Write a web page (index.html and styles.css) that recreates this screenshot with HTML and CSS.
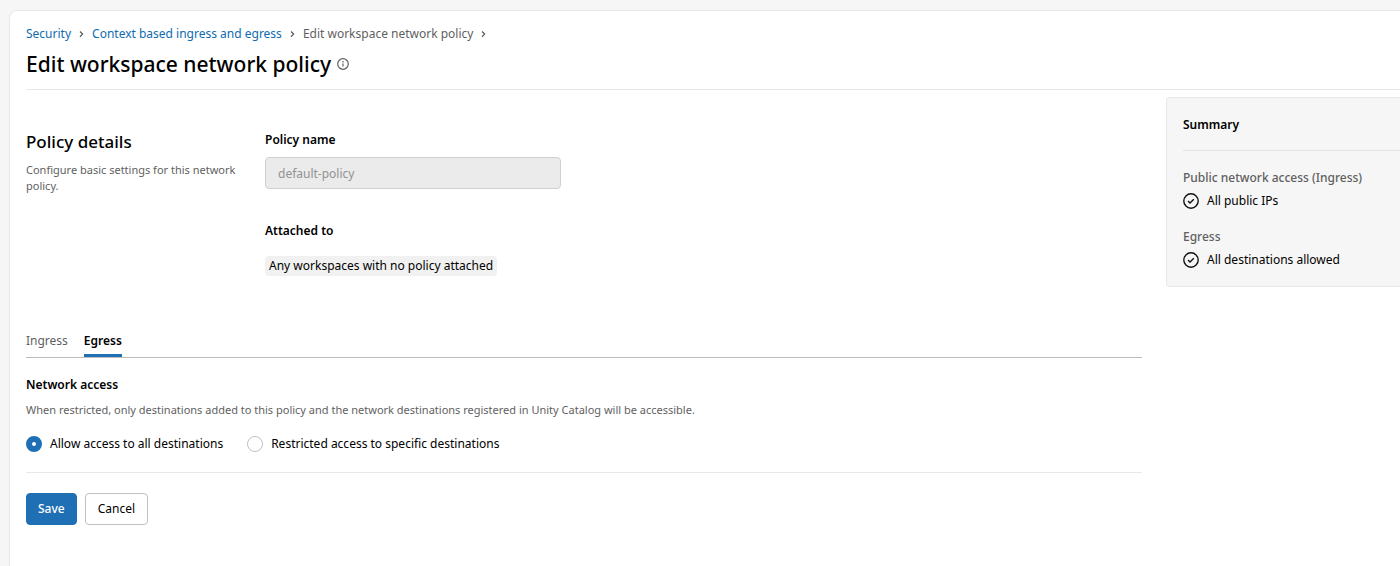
FILE: index.html
```html
<!DOCTYPE html>
<html lang="en">
<head>
<meta charset="utf-8">
<meta name="viewport" content="width=device-width, initial-scale=1">
<title>Edit workspace network policy</title>
<link rel="stylesheet" href="styles.css">
</head>
<body>
<div class="panel">
  <header class="page-header">
    <nav class="breadcrumb" aria-label="Breadcrumb">
      <a href="#">Security</a>
      <svg class="chevron" viewBox="0 0 5 8" aria-hidden="true"><path d="M1 1.5l2.6 2.6L1 6.7"/></svg>
      <a href="#">Context based ingress and egress</a>
      <svg class="chevron" viewBox="0 0 5 8" aria-hidden="true"><path d="M1 1.5l2.6 2.6L1 6.7"/></svg>
      <span>Edit workspace network policy</span>
      <svg class="chevron" viewBox="0 0 5 8" aria-hidden="true"><path d="M1 1.5l2.6 2.6L1 6.7"/></svg>
    </nav>
    <div class="title-row">
      <h1>Edit workspace network policy</h1>
      <svg class="info-icon" viewBox="0 0 12 12" aria-hidden="true"><circle cx="6" cy="6" r="5.3"/><path d="M6 5.4v3.2"/><path d="M6 3.1v1.3"/></svg>
    </div>
  </header>
  <div class="content">
    <main class="main">
      <section class="details">
        <div class="details-intro">
          <h2>Policy details</h2>
          <p class="hint">Configure basic settings for this network policy.</p>
        </div>
        <div class="details-fields">
          <label class="label" for="policy-name">Policy name</label>
          <input class="text-input" id="policy-name" type="text" value="default-policy" disabled>
          <h3 class="label attached-label">Attached to</h3>
          <span class="tag">Any workspaces with no policy attached</span>
        </div>
      </section>
      <div class="tabs" role="tablist">
        <button class="tab" type="button" role="tab" aria-selected="false">Ingress</button>
        <button class="tab tab-active" type="button" role="tab" aria-selected="true">Egress</button>
      </div>
      <section class="access">
        <h3 class="label">Network access</h3>
        <p class="hint">When restricted, only destinations added to this policy and the network destinations registered in Unity Catalog will be accessible.</p>
        <div class="radios">
          <label class="radio"><input type="radio" name="access" checked>Allow access to all destinations</label>
          <label class="radio"><input type="radio" name="access">Restricted access to specific destinations</label>
        </div>
      </section>
      <div class="actions">
        <button class="button primary" type="button">Save</button>
        <button class="button" type="button">Cancel</button>
      </div>
    </main>
    <aside class="summary">
      <h2 class="summary-title">Summary</h2>
      <h3 class="summary-label">Public network access (Ingress)</h3>
      <p class="summary-item"><svg class="check-icon" viewBox="0 0 16 16" aria-hidden="true"><circle cx="8" cy="8" r="7.2"/><path d="M5 8l2 2 3.8-3.8"/></svg>All public IPs</p>
      <h3 class="summary-label">Egress</h3>
      <p class="summary-item"><svg class="check-icon" viewBox="0 0 16 16" aria-hidden="true"><circle cx="8" cy="8" r="7.2"/><path d="M5 8l2 2 3.8-3.8"/></svg>All destinations allowed</p>
    </aside>
  </div>
</div>
</body>
</html>
```

FILE: styles.css
```css
* { box-sizing: border-box; }
body {
  margin: 0;
  min-height: 100vh;
  display: flex;
  padding: 10px 0 0 9px;
  background: #f6f6f6;
  color: #000;
  font: 12px/20px "Noto Sans", "Open Sans", sans-serif;
}
h1, h2, h3, p { margin: 0; }
button, input { font: inherit; color: inherit; }
.panel {
  flex: 1;
  min-width: 0;
  padding: 13px 0 16px 16px;
  background: #fff;
  border: 1px solid #e8e8e8;
  border-width: 1px 0 0 1px;
  border-radius: 8px 0 0 0;
}
.page-header { border-bottom: 1px solid #e8e8e8; padding-bottom: 11px; }
.breadcrumb { display: flex; align-items: center; gap: 8px; color: #5f5f5f; }
.breadcrumb a { color: #0e6bb0; text-decoration: none; }
.chevron { width: 5px; height: 8px; fill: none; stroke: #5f5f5f; stroke-width: 1.3; }
.title-row { display: flex; align-items: center; gap: 6px; margin-top: 6px; }
h1 { font-size: 21px; line-height: 28px; font-weight: 500; }
.info-icon { width: 12px; height: 12px; fill: none; stroke: #5f5f5f; stroke-width: 1.2; }
.content { display: grid; grid-template-columns: minmax(0, 1fr) 234px; gap: 24px; padding-top: 7px; }
.details { display: grid; grid-template-columns: 215px minmax(0, 1fr); gap: 24px; padding-top: 33px; }
.details h2 { font-size: 17px; line-height: 24px; font-weight: 500; margin-bottom: 8px; }
.hint { font-size: 11px; line-height: 16px; color: #5f5f5f; }
.label { display: block; font-size: 12px; line-height: 20px; font-weight: 600; }
.text-input {
  display: block;
  width: 296px;
  height: 32px;
  margin-top: 7px;
  padding: 0 12px;
  background: #ebebeb;
  border: 1px solid #d0d0d0;
  border-radius: 4px;
  color: #929292;
}
.attached-label { margin: 32px 0 15px; }
.tag { display: inline-block; padding: 0 4px; background: #f1f1f1; border-radius: 4px; }
.tabs { display: flex; gap: 16px; margin-top: 51px; border-bottom: 1px solid #bdbdbd; }
.tab { padding: 4px 0 3px; border: 0; border-bottom: 3px solid transparent; background: none; color: #5f5f5f; font-weight: 400; }
.tab-active { border-color: #1f6fb5; color: #000; font-weight: 600; }
.access { padding: 17px 0 18px; border-bottom: 1px solid #e8e8e8; }
.access .hint { margin-top: 7px; }
.radios { display: flex; gap: 24px; margin-top: 16px; }
.radio { display: flex; align-items: center; gap: 8px; }
.radio input {
  appearance: none;
  width: 16px;
  height: 16px;
  margin: 0;
  border: 1px solid #c0c0c0;
  border-radius: 50%;
  background: #fff;
}
.radio input:checked { border: 6px solid #1f6fb5; }
.actions { display: flex; gap: 8px; margin-top: 20px; }
.button { height: 32px; padding: 0 12px; border: 1px solid #c0c0c0; border-radius: 4px; background: #fff; }
.primary { padding: 0 11px; background: #1f6fb5; border-color: #1f6fb5; color: #fff; font-weight: 500; }
.summary {
  align-self: start;
  padding: 17px 0 16px 16px;
  background: #f6f6f6;
  border: 1px solid #e8e8e8;
  border-right: 0;
  border-radius: 4px 0 0 4px;
}
.summary-title { font-size: 12px; line-height: 20px; font-weight: 600; padding-bottom: 15px; margin-bottom: 17px; border-bottom: 1px solid #e3e3e3; }
.summary-label { font-size: 12px; line-height: 20px; font-weight: 500; color: #5f5f5f; }
.summary-item { display: flex; align-items: center; gap: 8px; margin-top: 3px; }
.summary-item + .summary-label { margin-top: 16px; }
.check-icon { width: 16px; height: 16px; fill: none; stroke: #111; stroke-width: 1.4; }
```
